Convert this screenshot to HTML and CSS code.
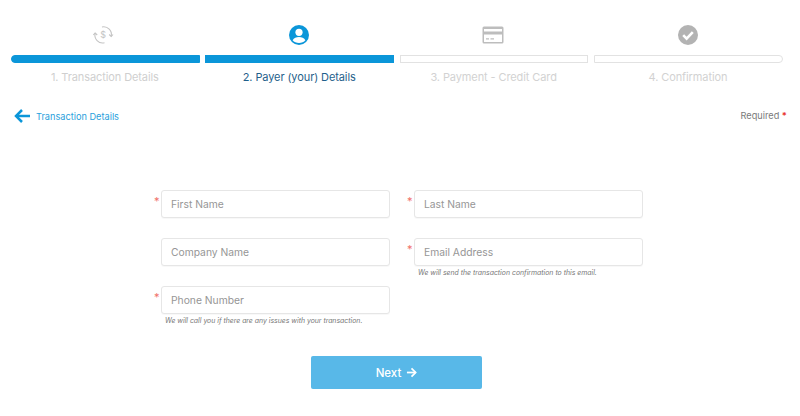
FILE: index.html
```html
<!DOCTYPE html>
<html lang="en">
<head>
<meta charset="utf-8">
<title>Payer Details</title>
<link rel="stylesheet" href="styles.css">
</head>
<body>
<main class="page">
  <ol class="steps">
    <li class="step done">
      <svg class="step-icon" viewBox="0 0 24 24" fill="none" stroke="#c4c4c4" stroke-width="1.100"><path d="M9 4A7.800 7.800 0 0 1 18.200 13.500"/><path d="M16.200 11.500l2 2 1.800-2"/><path d="M11.500 19.700A7.800 7.800 0 0 1 2.200 10"/><path d="M.4 12l1.800-2 2 2"/><text x="10.200" y="15" class="dollar">$</text></svg>
      <span class="bar bar-first filled"></span>
      <span class="label">1. Transaction Details</span>
    </li>
    <li class="step active">
      <svg class="step-icon" viewBox="1 0 24 24"><circle cx="12" cy="12" r="10" fill="#0b96d9"/><circle cx="12" cy="9.300" r="3.600" fill="#fff"/><path d="M5.600 17.200c1.200-2.400 3.800-3.200 6.400-3.200s5.200.8 6.400 3.200c-1.500 1.700-3.800 2.700-6.400 2.700s-4.900-1-6.400-2.700z" fill="#fff"/></svg>
      <span class="bar filled"></span>
      <span class="label">2. Payer (your) Details</span>
    </li>
    <li class="step">
      <svg class="step-icon" viewBox="1 0 24 24"><path fill-rule="evenodd" d="M3 3.500h18a1.500 1.500 0 0 1 1.500 1.500v14a1.500 1.500 0 0 1-1.500 1.500H3A1.500 1.500 0 0 1 1.500 19V5A1.500 1.500 0 0 1 3 3.500zM3 6v2.600h18V6zM3 11.600V19h18v-7.400zM5 15.200h3v1.300H5zM9.500 15.200h3.500v1.300H9.500z" fill="#bdbdbd"/></svg>
      <span class="bar"></span>
      <span class="label">3. Payment - Credit Card</span>
    </li>
    <li class="step">
      <svg class="step-icon" viewBox="0 0 24 24"><circle cx="12" cy="12" r="10" fill="#b3b3b3"/><path d="M7.200 12.200l3.400 3.400 6.200-6.400" fill="none" stroke="#fff" stroke-width="2.600"/></svg>
      <span class="bar bar-last"></span>
      <span class="label">4. Confirmation</span>
    </li>
  </ol>

  <div class="subhead">
    <a class="back" href="#">
      <svg class="back-icon" viewBox="0 0 16 14" fill="none" stroke="#0b96d9" stroke-width="2.500"><path d="M16 7H2"/><path d="M8 1L2 7l6 6"/></svg>
      <span>Transaction Details</span>
    </a>
    <span class="required">Required <b class="star-inline">*</b></span>
  </div>

  <form class="form">
    <div class="field req"><input class="input" placeholder="First Name"></div>
    <div class="field req"><input class="input" placeholder="Last Name"></div>
    <div class="field"><input class="input" placeholder="Company Name"></div>
    <div class="field req"><input class="input" placeholder="Email Address"><p class="hint">We will send the transaction confirmation to this email.</p></div>
    <div class="field req"><input class="input" placeholder="Phone Number"><p class="hint">We will call you if there are any issues with your transaction.</p></div>
  </form>

  <div class="actions">
    <button class="next" type="button">Next
      <svg class="next-icon" viewBox="0 0 12 12" fill="none" stroke="#fff" stroke-width="1.900"><path d="M1 6h9.500"/><path d="M6 1.500L10.500 6 6 10.500"/></svg>
    </button>
  </div>
</main>
</body>
</html>
```
FILE: styles.css
```css
* { box-sizing: border-box; }
html, body { margin: 0; padding: 0; background: #fff; }
body { font-family: "Inter", "Open Sans", "Liberation Sans", sans-serif; color: #555; overflow: hidden; }
.page { width: 800px; height: 416px; padding: 23px 17px 0 11px; }

.steps { list-style: none; margin: 0; padding: 0; display: grid; grid-template-columns: repeat(4, 188.700px); column-gap: 5.700px; }
.step { display: flex; flex-direction: column; align-items: center; }
.step-icon { width: 24px; height: 24px; margin-bottom: 8px; display: block; }
.dollar { font-size: 9px; fill: #c4c4c4; stroke: none; text-anchor: middle; font-family: "Inter", sans-serif; }
.bar { width: 100%; height: 8px; border: 1px solid #e2e2e2; background: #fff; display: block; }
.bar.filled { background: #0b96d9; border-color: #0b96d9; }
.bar-first { border-radius: 4px 0 0 4px; }
.bar-last { border-radius: 0 4px 4px 0; }
.label { margin-top: 6px; margin-left: -1px; font-size: 11px; letter-spacing: -.1px; line-height: 16px; color: #d2d2d2; white-space: nowrap; }
.step.done .label { color: #cfcfcf; }
.step.active .label { color: #1f5f8b; }

.subhead { display: flex; justify-content: space-between; align-items: center; margin: 21px 0 0 3px; height: 20px; }
.back { display: flex; align-items: center; gap: 6px; text-decoration: none; color: #2a9fdc; font-size: 9.200px; }
.back-icon { width: 16px; height: 14px; display: block; }
.required { font-size: 9.200px; color: #7a7a7a; margin-right: -4px; margin-top: -2px; }
.star-inline { color: #e8342f; font-weight: 700; }

.form { display: grid; grid-template-columns: 229px 229px; grid-auto-rows: 48px; column-gap: 24px; margin: 64px 0 0 150px; }
.field { position: relative; }
.req::before { content: "*"; position: absolute; left: -7px; top: 4px; font-size: 11px; line-height: 14px; color: #f0706a; }
.input { display: block; width: 100%; height: 28px; padding: 0 9px; border: 1px solid #e6e6e6; border-radius: 3px; background: #fff; font: inherit; font-size: 10.300px; color: #555; outline: none; box-shadow: 0 1px 1px rgba(0,0,0,.03); }
.input::placeholder { color: #969696; opacity: 1; }
.hint { margin: 2px 0 0 4px; font-size: 6.900px; line-height: 9px; font-style: italic; color: #777; white-space: nowrap; }

.actions { display: flex; margin: 22px 0 0 300px; }
.next { width: 171px; height: 33px; border: 0; border-radius: 2px; background: #58b8e8; color: #fff; font: inherit; font-size: 11.500px; font-weight: 500; display: flex; align-items: center; justify-content: center; gap: 5px; }
.next-icon { width: 11px; height: 11px; display: block; }
```
